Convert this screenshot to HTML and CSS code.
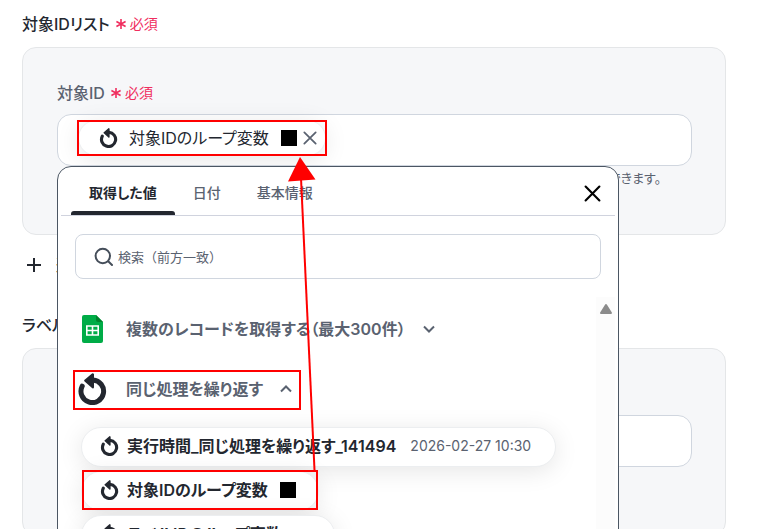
FILE: index.html
```html
<!DOCTYPE html>
<html lang="ja">
<head>
<meta charset="utf-8">
<title>対象IDリスト</title>
<link rel="stylesheet" href="styles.css">
</head>
<body>
<svg class="defs" aria-hidden="true">
  <symbol id="loop" viewBox="0 0 32 32">
    <path d="M5.2 13.2A11.300 11.300 0 1 0 16 7" fill="none" stroke="currentColor" stroke-width="5" stroke-linecap="round"/>
    <path d="M8.400 7.600 15.800 1.400V14.200Z" fill="currentColor" stroke="currentColor" stroke-width="2.400" stroke-linejoin="round"/>
  </symbol>
  <symbol id="required" viewBox="0 0 12 12">
    <path d="M6 1v10M1.400 3.500l9.200 5M10.600 3.500l-9.200 5" fill="none" stroke="currentColor" stroke-width="1.600"/>
  </symbol>
  <symbol id="cross" viewBox="0 0 16 16">
    <path d="M1.500 1.500l13 13M14.500 1.500l-13 13" fill="none" stroke="currentColor" stroke-width="2" stroke-linecap="round"/>
  </symbol>
</svg>
<main class="form">
  <section>
    <h2 class="label">対象IDリスト<span class="required"><svg><use href="#required"/></svg>必須</span></h2>
    <div class="panel">
      <label class="label label-sub" for="target">対象ID<span class="required"><svg><use href="#required"/></svg>必須</span></label>
      <div class="anchor">
        <div class="field">
          <span class="chip">
            <svg class="loop"><use href="#loop"/></svg>
            <span>対象IDのループ変数</span>
            <span class="square"></span>
            <button class="remove" type="button" aria-label="削除"><svg><use href="#cross"/></svg></button>
          </span>
          <input id="target" class="entry" type="text">
        </div>

        <div class="popup">
          <div class="tabs">
            <button class="tab active" type="button">取得した値</button>
            <button class="tab" type="button">日付</button>
            <button class="tab" type="button">基本情報</button>
            <button class="close" type="button" aria-label="閉じる"><svg><use href="#cross"/></svg></button>
          </div>
          <div class="search">
            <svg viewBox="0 0 20 20" aria-hidden="true"><path d="M14.200 14.200 18 18M16 9A7.200 7.200 0 1 1 1.600 9A7.200 7.200 0 0 1 16 9Z" fill="none" stroke="currentColor" stroke-width="2" stroke-linecap="round"/></svg>
            <input type="search" aria-label="検索" placeholder="検索（前方一致）">
          </div>
          <div class="results">
            <div class="list">
              <button class="group" type="button">
                <svg class="sheet" viewBox="0 0 22 28"><path d="M2 0H14L21 7V26a2 2 0 0 1-2 2H2a2 2 0 0 1-2-2V2A2 2 0 0 1 2 0Z" fill="#00ac47"/><path d="M14 0 21 7H16a2 2 0 0 1-2-2Z" fill="#00832d"/><path d="M4.800 11H16.200V20H4.800ZM4.800 15.500H16.200M10.500 11V20" fill="none" stroke="#fff" stroke-width="1.600"/></svg>
                <span>複数のレコードを取得する（最大300件）</span>
                <svg class="chevron" viewBox="0 0 14 10"><path d="M2 2.500 7 7.500 12 2.500"/></svg>
              </button>
              <button class="group" type="button">
                <svg class="loop-large"><use href="#loop"/></svg>
                <span>同じ処理を繰り返す</span>
                <svg class="chevron" viewBox="0 0 14 10"><path d="M2 7.500 7 2.500 12 7.500"/></svg>
              </button>
              <div class="values">
                <button class="pill" type="button"><svg class="loop"><use href="#loop"/></svg><span>実行時間_同じ処理を繰り返す_141494</span><span class="sample">2026-02-27 10:30</span></button>
                <button class="pill" type="button"><svg class="loop"><use href="#loop"/></svg><span>対象IDのループ変数</span><span class="square"></span></button>
                <button class="pill" type="button"><svg class="loop"><use href="#loop"/></svg><span>ラベルIDのループ変数</span><span class="spacer"></span></button>
              </div>
            </div>
            <div class="track"><svg viewBox="0 0 14 12"><path d="M7 2 12 10H2Z"/></svg></div>
          </div>
        </div>
      </div>
      <p class="help">できます。</p>
    </div>
    <button class="add" type="button"><svg viewBox="0 0 16 16"><path d="M8 1V15M1 8H15"/></svg>追加</button>
  </section>
  <section>
    <h2 class="label">ラベルID</h2>
    <div class="panel">
      <label class="label label-sub" for="tag">ラベル</label>
      <input id="tag" class="field" type="text">
      <p class="help"></p>
    </div>
  </section>
  <svg class="callouts" aria-hidden="true">
    <g fill="none" stroke="#f00" stroke-width="2">
      <rect x="78" y="121" width="248" height="34"/>
      <rect x="74" y="371" width="226" height="38"/>
      <rect x="83" y="471" width="234" height="38"/>
      <path d="M301 178 314.500 470"/>
    </g>
    <path d="M300 157 315.500 179.500 288 181.500Z" fill="#f00"/>
  </svg>
</main>
</body>
</html>
```
FILE: styles.css
```css
* {
  box-sizing: border-box;
}

body {
  margin: 0;
  color: #23272f;
  background: #fff;
  font: 16px/24px Inter, "Noto Sans CJK JP", sans-serif;
  font-feature-settings: "palt";
}

button,
input {
  margin: 0;
  padding: 0;
  border: 0;
  background: none;
  color: inherit;
  font: inherit;
  font-feature-settings: inherit;
}

svg {
  flex: none;
}

.defs {
  display: none;
}

.form {
  position: relative;
  height: 100vh;
  overflow: hidden;
  padding: 12px 39px 0 22px;
}

.label {
  display: flex;
  align-items: center;
  gap: 5px;
  margin: 0;
  font-size: 16px;
  font-weight: 500;
}

.label-sub {
  color: #5a6270;
}

.required {
  display: flex;
  align-items: center;
  gap: 3px;
  color: #f02d5e;
  font-size: 14px;
  font-weight: 400;
}

.required svg {
  width: 12px;
  height: 12px;
}

.panel {
  margin-top: 11px;
  padding: 33px 33px 44px 34px;
  border: 1px solid #e4e6e8;
  border-radius: 14px;
  background: #f6f7f9;
}

.anchor {
  position: relative;
}

.field {
  display: flex;
  align-items: center;
  width: 100%;
  height: 52px;
  margin-top: 9px;
  padding: 0 20px;
  border: 1px solid #d0d6df;
  border-radius: 14px;
  background: #fff;
}

.entry {
  flex: 1;
  min-width: 0;
}

.chip,
.pill {
  display: flex;
  align-items: center;
  border: 1px solid #eceef0;
  border-radius: 20px;
  background: #fff;
  box-shadow: 0 4px 24px rgba(0, 0, 0, 0.1);
  white-space: nowrap;
}

.chip {
  height: 36px;
  margin-bottom: 4px;
  padding: 0 8px 0 20px;
}

.loop {
  width: 20px;
  height: 20px;
  margin-right: 10px;
}

.square {
  width: 16px;
  height: 16px;
  margin-left: 12px;
  background: #000;
}

.remove {
  display: flex;
  margin-left: 6px;
  color: #5a6270;
}

.remove svg {
  width: 14px;
  height: 14px;
}

.help {
  min-height: 24px;
  margin: 0;
  padding-right: 31px;
  color: #5a6270;
  font-size: 13px;
  text-align: right;
}

.add {
  display: flex;
  align-items: center;
  gap: 14px;
  margin: 18px 0 36px 4px;
  font-weight: 500;
}

.add svg {
  width: 16px;
  height: 16px;
  fill: none;
  stroke: currentColor;
  stroke-width: 2;
}

.popup {
  position: absolute;
  z-index: 1;
  top: 100%;
  left: 0;
  width: 562px;
  padding: 0 3px;
  border: 1px solid #4b5663;
  border-radius: 14px;
  background: #fff;
}

.tabs {
  display: flex;
  height: 49px;
  padding: 0 14px 0 10px;
  border-bottom: 1px solid #d0d3de;
}

.tab {
  padding: 8px 18px 0;
  border-bottom: 4px solid transparent;
  color: #5a6270;
  font-size: 14px;
  font-weight: 500;
}

.active {
  position: relative;
  color: #23272f;
  font-weight: 700;
}

.active::after {
  content: "";
  position: absolute;
  inset: auto 0 -4px;
  height: 4px;
  border-radius: 3px 3px 0 0;
  background: #23272f;
}

.close {
  display: flex;
  align-items: center;
  margin-left: auto;
  padding-top: 5px;
  color: #000;
}

.close svg {
  width: 17px;
  height: 17px;
}

.search {
  display: flex;
  align-items: center;
  gap: 4px;
  height: 45px;
  margin: 18px 14px;
  padding: 0 18px;
  border: 1px solid #d0d6df;
  border-radius: 8px;
  color: #454e5a;
}

.search svg {
  width: 20px;
  height: 20px;
}

.search input {
  flex: 1;
  outline: 0;
  font-size: 13px;
  font-feature-settings: normal;
}

.search input::placeholder {
  color: #5a6270;
}

.results {
  display: flex;
}

.list {
  flex: 1;
  min-width: 0;
  padding: 2px 0 0 17px;
}

.group {
  display: flex;
  align-items: center;
  height: 60px;
  color: #5a6270;
  font-weight: 600;
  white-space: nowrap;
}

.sheet {
  width: 22px;
  height: 28px;
  margin: 0 22px 0 4px;
}

.loop-large {
  width: 32px;
  height: 32px;
  margin: 0 17px 0 -1px;
  color: #23272f;
}

.chevron {
  width: 14px;
  height: 10px;
  margin-left: 16px;
  fill: none;
  stroke: #5a6270;
  stroke-width: 2;
}

.values {
  display: flex;
  flex-direction: column;
  align-items: flex-start;
  gap: 4px;
  padding: 8px 0 20px 3px;
}

.pill {
  height: 40px;
  padding: 0 22px 2px 18px;
  font-weight: 600;
}

.pill .loop {
  margin-right: 7px;
}

.sample {
  padding: 0 2px 0 14px;
  color: #5a6270;
  font-size: 14px;
  font-weight: 400;
}

.spacer {
  width: 30px;
}

.track {
  width: 19px;
  background: #fcfcfc;
  text-align: center;
}

.track svg {
  width: 14px;
  height: 12px;
  fill: #8b8b8b;
  stroke: #8b8b8b;
  stroke-width: 2;
  stroke-linejoin: round;
}

.callouts {
  position: absolute;
  z-index: 2;
  inset: 0;
  width: 100%;
  height: 100%;
  pointer-events: none;
}
```
